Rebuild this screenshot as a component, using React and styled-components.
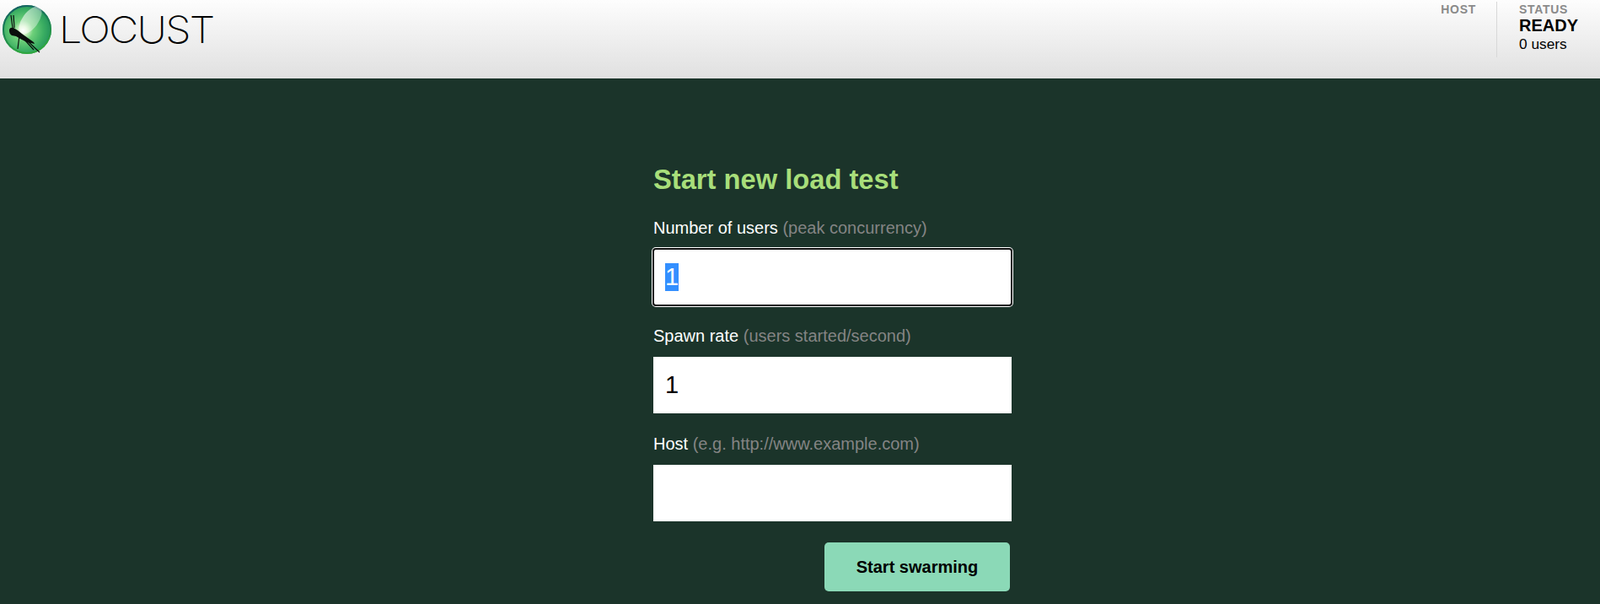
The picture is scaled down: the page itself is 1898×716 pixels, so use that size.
import { useEffect, useRef } from "react";
import styled, { createGlobalStyle } from "styled-components";

const GlobalStyle = createGlobalStyle`
  html, body {
    margin: 0;
    height: 100%;
    overflow: hidden;
    background: #1b342a;
    font-family: "Liberation Sans", Arial, sans-serif;
  }
`;

const Header = styled.header`
  height: 93px;
  box-sizing: border-box;
  display: flex;
  justify-content: space-between;
  background: linear-gradient(#fdfdfd, #e0e0e0);
`;

const Brand = styled.div`
  display: flex;
  align-items: flex-start;
  padding: 5px 0 0 2px;
`;

const LogoText = styled.span`
  font-family: Inter, sans-serif;
  font-weight: 200;
  font-size: 44px;
  line-height: 60px;
  letter-spacing: -1.6px;
  color: #000;
  margin-left: 8px;
  transform: scaleX(1.105);
  transform-origin: left center;
`;

const Stats = styled.div`
  display: flex;
  padding-top: 2px;
  padding-right: 26px;
`;

const Stat = styled.div`
  padding-left: ${(p) => (p.$divided ? "26px" : "0")};
  padding-right: ${(p) => (p.$divided ? "0" : "24px")};
  border-left: ${(p) => (p.$divided ? "1px solid #d8d8d8" : "none")};
  height: 66px;
`;

const StatLabel = styled.div`
  font-size: 14px;
  font-weight: 700;
  line-height: 16px;
  letter-spacing: 0.7px;
  color: #8a8a8a;
  margin-top: 1px;
`;

const StatValue = styled.div`
  font-size: 20px;
  font-weight: 700;
  line-height: 22px;
  color: #000;
`;

const StatNote = styled.div`
  font-size: 17.3px;
  line-height: 22px;
  color: #000;
`;

const Main = styled.main`
  display: flex;
  justify-content: center;
  padding-top: 101px;
  padding-left: 77px;
`;

const Form = styled.form`
  width: 425px;
  display: flex;
  flex-direction: column;
`;

const Title = styled.h2`
  margin: 0 0 28px;
  font-size: 32.7px;
  line-height: 37px;
  font-weight: 700;
  color: #a8de7a;
`;

const Label = styled.label`
  display: block;
  font-size: 20px;
  line-height: 23px;
  color: #fff;
  margin-bottom: 13px;
`;

const Hint = styled.span`
  color: #848484;
`;

const Input = styled.input`
  display: block;
  width: 425px;
  height: 67px;
  box-sizing: border-box;
  border: 0;
  border-radius: 0;
  padding: 0 14px;
  margin-bottom: 25px;
  background: #fff;
  color: #000;
  font-family: "Liberation Sans", Arial, sans-serif;
  font-size: 29px;

  &:focus {
    outline: 2px solid #101010;
    outline-offset: -1px;
    border-radius: 3px;
    box-shadow: 0 0 0 2px #fff;
  }
  &::selection {
    background: #338fff;
    color: #fff;
  }
`;

const Actions = styled.div`
  display: flex;
  justify-content: flex-end;
  padding-right: 2px;
`;

const Submit = styled.button`
  width: 220px;
  height: 58px;
  border: 0;
  border-radius: 5px;
  background: #8bd9b7;
  color: #000;
  font-family: "Liberation Sans", Arial, sans-serif;
  font-size: 20px;
  font-weight: 700;
`;

function Logo() {
  return (
    <svg width="60" height="60" viewBox="0 0 60 60">
      <defs>
        <radialGradient id="globe" cx="0.42" cy="0.52" r="0.6">
          <stop offset="0" stopColor="#ffffff" />
          <stop offset="0.14" stopColor="#d4f4c8" />
          <stop offset="0.34" stopColor="#6ed07a" />
          <stop offset="0.7" stopColor="#3bae62" />
          <stop offset="1" stopColor="#1f8f5a" />
        </radialGradient>
        <linearGradient id="rim" x1="0" y1="0" x2="0.3" y2="1">
          <stop offset="0" stopColor="#155a68" />
          <stop offset="0.5" stopColor="#1a7f54" />
          <stop offset="1" stopColor="#2fa63f" />
        </linearGradient>
        <linearGradient id="wing" x1="1" y1="0" x2="0" y2="1">
          <stop offset="0" stopColor="#ffffff" stopOpacity="0.3" />
          <stop offset="1" stopColor="#ffffff" stopOpacity="0.65" />
        </linearGradient>
      </defs>
      <circle cx="30" cy="30" r="29" fill="url(#globe)" />
      <circle cx="30" cy="30" r="28" fill="none" stroke="url(#rim)" strokeWidth="2" />
      <ellipse cx="34" cy="19" rx="9.5" ry="19" transform="rotate(36 34 19)" fill="url(#wing)" />
      <path
        d="M9 30 Q10 27 14 28 L19 31 L24 35 L38 45 L39 47 L30 45 L22 41 L17 38 L12 37 Q8.5 35 9 30 Z"
        fill="#0a0f0c"
      />
      <path
        d="M11 13 L13 28 M14 13 L15 28 M21 37 L19 53 M27 42 L38 54 M31 44 L45 57"
        stroke="#0a0f0c"
        strokeWidth="1.2"
        fill="none"
      />
    </svg>
  );
}

export default function App() {
  const usersRef = useRef(null);

  useEffect(() => {
    usersRef.current.focus();
    usersRef.current.select();
  }, []);

  return (
    <>
      <GlobalStyle />
      <Header>
        <Brand>
          <Logo />
          <LogoText>LOCUST</LogoText>
        </Brand>
        <Stats>
          <Stat>
            <StatLabel>HOST</StatLabel>
          </Stat>
          <Stat $divided>
            <StatLabel>STATUS</StatLabel>
            <StatValue>READY</StatValue>
            <StatNote>0 users</StatNote>
          </Stat>
        </Stats>
      </Header>
      <Main>
        <Form onSubmit={(e) => e.preventDefault()}>
          <Title>Start new load test</Title>
          <Label htmlFor="users">
            Number of users <Hint>(peak concurrency)</Hint>
          </Label>
          <Input id="users" ref={usersRef} defaultValue="1" />
          <Label htmlFor="rate">
            Spawn rate <Hint>(users started/second)</Hint>
          </Label>
          <Input id="rate" defaultValue="1" />
          <Label htmlFor="host">
            Host <Hint>(e.g. http://www.example.com)</Hint>
          </Label>
          <Input id="host" />
          <Actions>
            <Submit type="submit">Start swarming</Submit>
          </Actions>
        </Form>
      </Main>
    </>
  );
}
